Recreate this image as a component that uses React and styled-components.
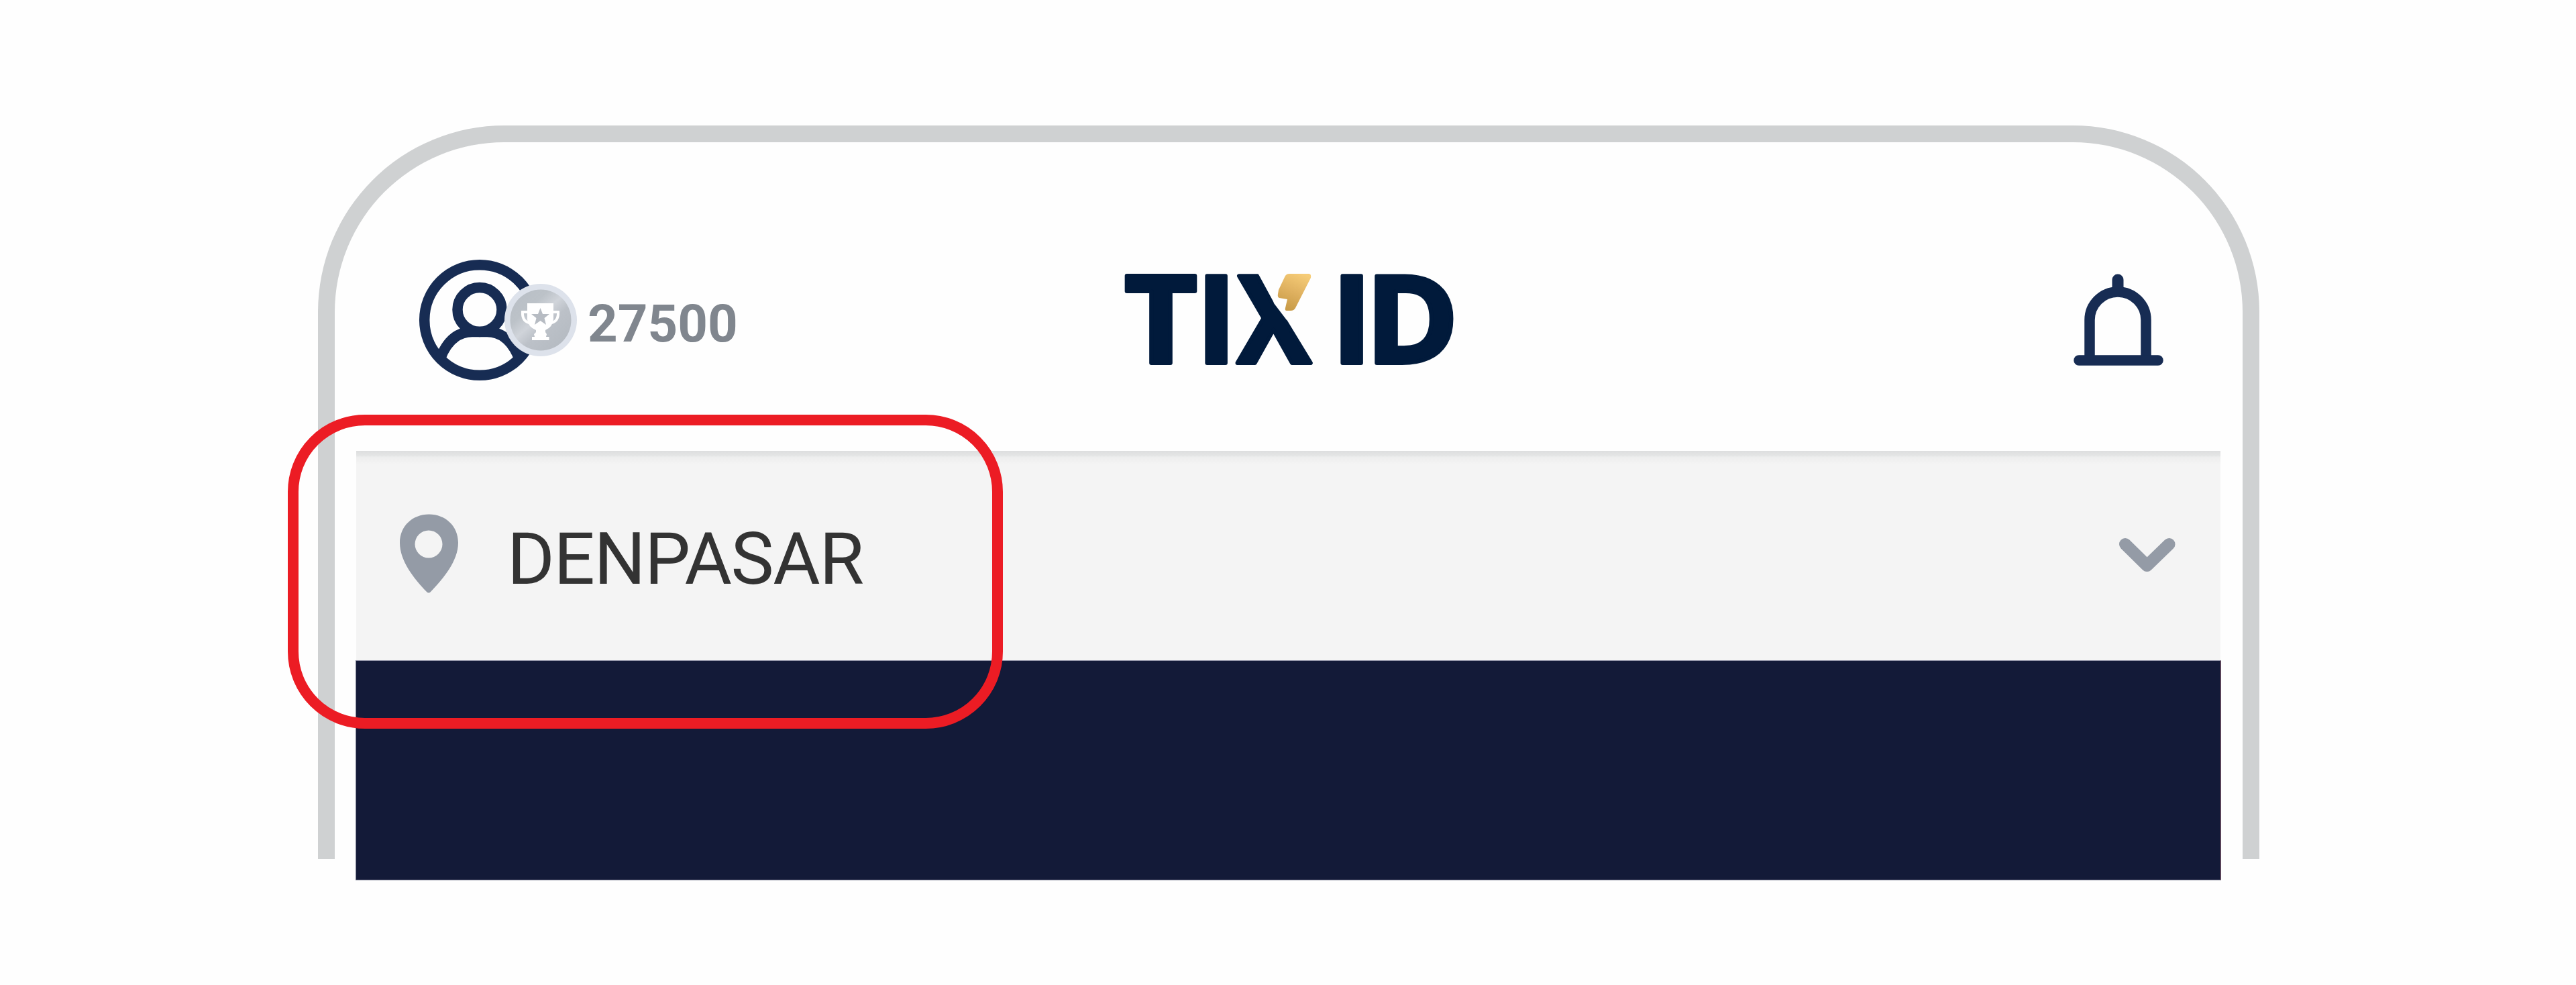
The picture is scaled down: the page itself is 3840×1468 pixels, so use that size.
import React from "react";
import styled, { createGlobalStyle } from "styled-components";

const GlobalStyle = createGlobalStyle`
  *, *::before, *::after { box-sizing: border-box; }
  body { margin: 0; background: #fefefe; }
  svg { display: block; flex: none; overflow: visible; }
`;

const Page = styled.main`
  position: relative;
  width: 3840px;
  height: 1468px;
  padding-top: 187px;
  padding-left: 474px;
  overflow: hidden;
  background: #fefefe;
  font-family: Roboto, "Liberation Sans", sans-serif;
`;

const Phone = styled.section`
  width: 2894px;
  height: 1093px;
  padding: 0 33px 0 32px;
  border: 25px solid #cfd1d2;
  border-bottom: 0;
  border-radius: 278px 278px 0 0;
`;

const Header = styled.header`
  display: grid;
  grid-template-columns: 1fr auto 1fr;
  align-items: start;
  height: 460px;
  padding-top: 174px;
`;

const Profile = styled.div`
  display: flex;
  align-items: center;
  height: 182px;
  margin-left: 94px;
`;

const Points = styled.span`
  margin: 12px 0 0 18px;
  color: #80868e;
  font-size: 78px;
  font-weight: 700;
  line-height: 92px;
`;

const Brand = styled.h1`
  margin: 22px 0 0;
  font-size: 0;
`;

const LogoText = styled.text`
  fill: #011a3b;
  stroke: #011a3b;
  stroke-width: 6px;
  stroke-linejoin: round;
  font-family: "Open Sans", "Noto Sans", sans-serif;
  font-size: 182px;
  font-weight: 700;
`;

const Notifications = styled.div`
  justify-self: end;
  margin: 22px 85px 0 0;
`;

const LocationBar = styled.div`
  display: flex;
  align-items: flex-start;
  height: 312px;
  padding: 94px 67px 0 65px;
  background: linear-gradient(#dddedf 0, #e4e5e5 7px, #edeeee 9px, #f1f1f1 15px, #f4f4f4 20px) #f4f4f4;
`;

const City = styled.span`
  flex: 1;
  margin: 4px 0 0 73px;
  color: #333;
  font-size: 108px;
  line-height: 126px;
  letter-spacing: -1.4px;
`;

const ChevronSlot = styled.div`
  padding-top: 36px;
`;

const Banner = styled.div`
  height: 328px;
  margin-left: -1px;
  margin-right: -1px;
  border: 1px solid #73758a;
  border-top-color: #8c8fa3;
  border-right-color: #8b606f;
  background: #131a38;
`;

const Highlight = styled.div`
  position: absolute;
  top: 618px;
  left: 429px;
  width: 1066px;
  height: 468px;
  border: 16px solid #ec1c24;
  border-radius: 115px;
`;

function ProfileIcon() {
  return (
    <svg width="233" height="182" viewBox="625 386 233 182" fill="none" aria-label="Profile">
      <defs>
        <linearGradient id="coin" x1="768" y1="436" x2="842" y2="518" gradientUnits="userSpaceOnUse">
          <stop offset="0" stopColor="#b9bfc6" />
          <stop offset=".28" stopColor="#bcc2c8" />
          <stop offset=".46" stopColor="#d0d4da" />
          <stop offset=".62" stopColor="#bcc1c8" />
          <stop offset="1" stopColor="#b4bac1" />
        </linearGradient>
      </defs>
      <g stroke="#172c53" strokeWidth="15.5">
        <circle cx="715" cy="477" r="82.3" />
        <circle cx="715" cy="461.5" r="33" />
        <path d="M656 535C665 511 680 494.5 704 494.5H726C750 494.5 765 511 774 535" />
      </g>
      <circle cx="806" cy="477" r="54" fill="#dde2eb" />
      <circle cx="806" cy="477" r="45.5" fill="url(#coin)" />
      <path d="M787 465H779Q778 480 792 482M824 465H832Q833 480 819 482" stroke="#fff" strokeWidth="4" />
      <path
        fill="#fff"
        d="M786 452H825V476Q824 487 813 492V495L815 498L814 502H818.500V507H793V502H797L796 498L799 495V492Q787 487 786 476Z"
      />
      <path fill="#b7bcc3" d="M805.5 459L809 468H819L811.5 474L814 484L805.5 478L797 484L799.5 474L792 468H802Z" />
    </svg>
  );
}

function Logo() {
  return (
    <svg width="490" height="136" viewBox="1675 408 490 136" role="img" aria-label="TIX ID">
      <defs>
        <linearGradient id="gold" x1="1940" y1="408" x2="1918" y2="463" gradientUnits="userSpaceOnUse">
          <stop offset="0" stopColor="#f6cc77" />
          <stop offset=".5" stopColor="#dfb160" />
          <stop offset="1" stopColor="#c79a46" />
        </linearGradient>
      </defs>
      <LogoText transform="translate(1675 541) scale(1.034 1)">T</LogoText>
      <LogoText transform="translate(1782 541)">I</LogoText>
      <LogoText transform="translate(1843.2 541) scale(.905 1)">X</LogoText>
      <LogoText transform="translate(1984 541)">I</LogoText>
      <LogoText transform="translate(2034.6 541) scale(1.03 1)">D</LogoText>
      <path fill="#fefefe" d="M1890 402H1975V404L1917 477L1898 452Z" />
      <path
        fill="url(#gold)"
        d="M1921 408H1950Q1954 408 1953 414L1930 459Q1928 463 1923 463H1917Q1914 463 1915 459L1918 446L1906 444Q1903 443 1904 438L1905 432L1914 413Q1916 408 1921 408Z"
      />
    </svg>
  );
}

function BellIcon() {
  return (
    <svg width="134" height="137" viewBox="3091 408 134 137" fill="none" stroke="#172c53" aria-label="Notifications">
      <path d="M3157 417V432" strokeWidth="17" strokeLinecap="round" />
      <path d="M3115 536V477A42 42 0 0 1 3199 477V536" strokeWidth="15.5" />
      <path d="M3099 537H3217" strokeWidth="15.5" strokeLinecap="round" />
    </svg>
  );
}

function PinIcon() {
  return (
    <svg width="87" height="118" viewBox="596 766 87 118" aria-label="Location">
      <path
        fill="#949ba6"
        fillRule="evenodd"
        d="M639.5 766.5C664 766.5 683 784 683 809C683 836 661 862 642 882Q639 885 636 882C617 862 596 836 596 809C596 784 615 766.5 639.5 766.5ZM639 790.5A20.5 20.5 0 1 0 639 831.5A20.5 20.5 0 1 0 639 790.5Z"
      />
    </svg>
  );
}

function ChevronIcon() {
  return (
    <svg width="84" height="51" viewBox="3159 802 84 51" fill="none" aria-label="Choose city">
      <path d="M3168 811L3200.5 843L3233.5 811" stroke="#949ba6" strokeWidth="18" strokeLinecap="round" strokeLinejoin="round" />
    </svg>
  );
}

export default function App() {
  return (
    <>
      <GlobalStyle />
      <Page>
        <Phone>
          <Header>
            <Profile>
              <ProfileIcon />
              <Points>27500</Points>
            </Profile>
            <Brand>
              <Logo />
            </Brand>
            <Notifications>
              <BellIcon />
            </Notifications>
          </Header>
          <LocationBar>
            <PinIcon />
            <City>DENPASAR</City>
            <ChevronSlot>
              <ChevronIcon />
            </ChevronSlot>
          </LocationBar>
          <Banner />
        </Phone>
        <Highlight />
      </Page>
    </>
  );
}
